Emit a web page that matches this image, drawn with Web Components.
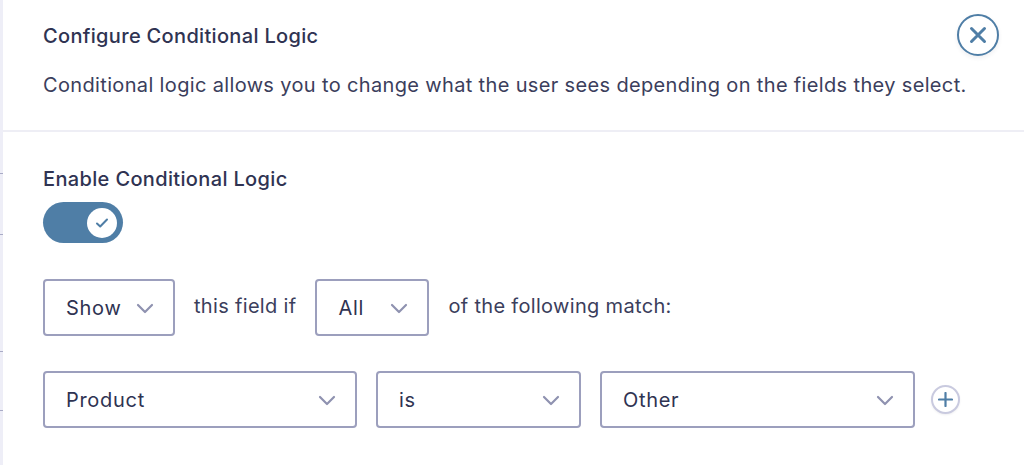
<!DOCTYPE html>
<html>
<head>
<meta charset="utf-8">
<title>Configure Conditional Logic</title>
<style>
  html, body { margin: 0; height: 100%; background: #fff; overflow: hidden; }
  body { font-family: Inter, "Liberation Sans", sans-serif; color: #2f3352; }
</style>
</head>
<body>
<logic-dialog>
  <span slot="title">Configure Conditional Logic</span>
  <span slot="description">Conditional logic allows you to change what the user sees depending on the fields they select.</span>
  <logic-toggle label="Enable Conditional Logic"></logic-toggle>
  <logic-row class="first">
    <logic-select label="Show" width="132"></logic-select>
    <span>this field if</span>
    <logic-select label="All" width="114"></logic-select>
    <span>of the following match:</span>
  </logic-row>
  <logic-row class="second">
    <logic-select label="Product" width="314"></logic-select>
    <logic-select label="is" width="205"></logic-select>
    <logic-select label="Other" width="315"></logic-select>
    <logic-add></logic-add>
  </logic-row>
</logic-dialog>

<script>
class LogicDialog extends HTMLElement {
    constructor() {
        super();
        this.shadowDOM = this.attachShadow({ mode: 'open' });
        this.shadowDOM.innerHTML = `
        <style>
            :host {
                display: block;
                height: 465px;
                box-sizing: border-box;
                border-left: 3px solid #eeeef7;
                position: relative;
            }
            .tick {
                position: absolute;
                left: -3px;
                width: 3px;
                height: 1px;
                background: #a9abc6;
            }
            header {
                box-sizing: border-box;
                height: 132px;
                padding: 24px 40px 0;
                border-bottom: 2px solid #eeeef5;
                position: relative;
            }
            h2 {
                margin: 0;
                font-size: 20px;
                line-height: 24px;
                font-weight: 500;
                letter-spacing: 0.33px;
                color: #2f3352;
            }
            p {
                margin: 25px 0 0;
                font-size: 20px;
                line-height: 24px;
                letter-spacing: 0.35px;
                white-space: nowrap;
                color: #3b3e5c;
            }
            button {
                position: absolute;
                right: 25px;
                top: 14px;
                width: 42px;
                height: 42px;
                box-sizing: border-box;
                padding: 0;
                display: grid;
                place-items: center;
                background: #fff;
                border: 2px solid #4f7ea6;
                border-radius: 50%;
                box-shadow: 0 2px 4px rgba(47, 51, 82, .08);
            }
            main {
                padding: 35px 40px 0;
            }
        </style>
        <i class="tick" style="top:173px"></i>
        <i class="tick" style="top:234px"></i>
        <i class="tick" style="top:351px"></i>
        <i class="tick" style="top:410px"></i>
        <header>
            <h2><slot name="title"></slot></h2>
            <p><slot name="description"></slot></p>
            <button aria-label="Close">
                <svg width="18" height="18" viewBox="0 0 18 18" fill="none" stroke="#4f7ea6" stroke-width="3" stroke-linecap="round"><path d="M2.5 2.5l13 13M15.5 2.5l-13 13"/></svg>
            </button>
        </header>
        <main><slot></slot></main>
        `;
    }
}

class LogicToggle extends HTMLElement {
    constructor() {
        super();
        this.shadowDOM = this.attachShadow({ mode: 'open' });
    }

    connectedCallback() {
        this.shadowDOM.innerHTML = `
        <style>
            :host { display: block; }
            label {
                display: block;
                font-size: 20px;
                line-height: 24px;
                font-weight: 500;
                letter-spacing: 0.35px;
                color: #2f3352;
            }
            .track {
                display: flex;
                justify-content: flex-end;
                align-items: center;
                box-sizing: border-box;
                width: 80px;
                height: 41px;
                margin-top: 11px;
                padding-right: 6px;
                border-radius: 21px;
                background: #4f7ea6;
            }
            .knob {
                display: grid;
                place-items: center;
                width: 30px;
                height: 30px;
                border-radius: 50%;
                background: #fff;
            }
        </style>
        <label>${this.getAttribute('label')}</label>
        <div class="track">
            <div class="knob">
                <svg width="14" height="12" viewBox="0 0 14 12" fill="none" stroke="#4f7ea6" stroke-width="2" stroke-linecap="round" stroke-linejoin="round"><path d="M2 6.5l3.2 3 6.8-7"/></svg>
            </div>
        </div>
        `;
    }
}

class LogicRow extends HTMLElement {
    constructor() {
        super();
        this.shadowDOM = this.attachShadow({ mode: 'open' });
        this.shadowDOM.innerHTML = `
        <style>
            :host {
                display: flex;
                align-items: center;
                gap: 19px;
                font-size: 20px;
                letter-spacing: 0.32px;
                color: #3b3e5c;
            }
            :host(.first) { margin-top: 36px; }
            :host(.second) { margin-top: 35px; }
            ::slotted(span) { padding-bottom: 3px; }
        </style>
        <slot></slot>
        `;
    }
}

class LogicSelect extends HTMLElement {
    constructor() {
        super();
        this.shadowDOM = this.attachShadow({ mode: 'open' });
    }

    connectedCallback() {
        this.shadowDOM.innerHTML = `
        <style>
            :host {
                display: flex;
                align-items: center;
                justify-content: space-between;
                box-sizing: border-box;
                width: ${this.getAttribute('width')}px;
                height: 57px;
                padding: 0 19px 0 21px;
                background: #fff;
                border: 2px solid #9c9fbd;
                border-radius: 4px;
                font-size: 20px;
                letter-spacing: 0.7px;
                color: #2f3352;
            }
            svg { flex: none; margin-top: 1px; }
        </style>
        <span>${this.getAttribute('label')}</span>
        <svg width="18" height="11" viewBox="0 0 18 11" fill="none" stroke="#8f92b0" stroke-width="2.2" stroke-linecap="round" stroke-linejoin="round"><path d="M2 2l7 7 7-7"/></svg>
        `;
    }
}

class LogicAdd extends HTMLElement {
    constructor() {
        super();
        this.shadowDOM = this.attachShadow({ mode: 'open' });
        this.shadowDOM.innerHTML = `
        <style>
            :host {
                display: grid;
                place-items: center;
                box-sizing: border-box;
                width: 29px;
                height: 29px;
                margin-left: -3px;
                border: 2px solid #c9cadf;
                border-radius: 50%;
                background: #fff;
                box-shadow: 0 1px 2px rgba(47, 51, 82, .08);
            }
        </style>
        <svg width="15" height="15" viewBox="0 0 15 15" fill="none" stroke="#4f7ea6" stroke-width="2.2" stroke-linecap="round"><path d="M7.5 1v13M1 7.5h13"/></svg>
        `;
    }
}

customElements.define('logic-dialog', LogicDialog);
customElements.define('logic-toggle', LogicToggle);
customElements.define('logic-row', LogicRow);
customElements.define('logic-select', LogicSelect);
customElements.define('logic-add', LogicAdd);
</script>
</body>
</html>
